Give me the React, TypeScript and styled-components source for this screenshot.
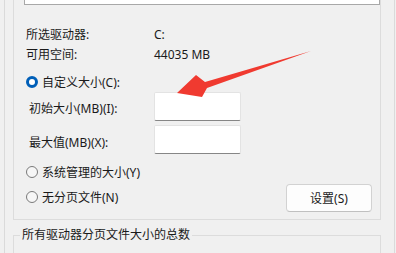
import styled, { createGlobalStyle } from "styled-components";

const GlobalStyle = createGlobalStyle`
  html, body {
    margin: 0;
    padding: 0;
    background: #f0f0f0;
    overflow: hidden;
  }
  body {
    font-family: "Noto Sans", "Noto Sans CJK SC", sans-serif;
    font-size: 12px;
    color: #1a1a1a;
  }
`;

const Frame = styled.div`
  position: relative;
  width: 396px;
  height: 253px;
  padding-left: 4px;
  box-sizing: border-box;
  overflow: hidden;
`;

const Panel = styled.div`
  width: 391px;
  height: 100%;
  border-left: 1px solid #dadada;
  border-right: 1px solid #dadada;
  padding: 0 13px 0 8px;
  box-sizing: border-box;
`;

const Group = styled.div`
  border: 1px solid #dcdcdc;
  border-top: none;
  padding-bottom: 7px;
`;

const ListBox = styled.div`
  margin-left: 10px;
  height: 5px;
  background: #ffffff;
  border: 1px solid #a8a8a8;
  border-top: none;
  box-sizing: border-box;
`;

const InfoGrid = styled.div`
  display: grid;
  grid-template-columns: 128px auto;
  margin: 20px 0 0 12px;
  line-height: 20px;
`;

const RadioRow = styled.label<{ $top?: number }>`
  display: flex;
  align-items: center;
  gap: 4px;
  height: 20px;
  padding-left: 12px;
  margin-top: ${(p) => p.$top ?? 0}px;
`;

const RadioDot = styled.span<{ $checked?: boolean }>`
  width: 12px;
  height: 12px;
  border-radius: 50%;
  box-sizing: border-box;
  flex: none;
  background: ${(p) => (p.$checked ? "#ffffff" : "#f6f6f6")};
  border: ${(p) => (p.$checked ? "3.5px solid #005fb8" : "1px solid #7a7a7a")};
`;

const SizeGrid = styled.div`
  display: grid;
  grid-template-columns: 125px 87px;
  row-gap: 4px;
  align-items: center;
  margin-left: 15px;
`;

const SizeLabel = styled.span<{ $shift?: number }>`
  position: relative;
  top: ${(p) => p.$shift ?? 0}px;
`;

const TextInput = styled.div`
  height: 29px;
  background: #ffffff;
  border: 1px solid #e3e3e3;
  border-bottom-color: #868686;
  border-radius: 2px;
  box-sizing: border-box;
`;

const Bottom = styled.div`
  display: flex;
  justify-content: space-between;
  align-items: flex-start;
  margin-top: 8px;
  padding-right: 8px;
`;

const RadioColumn = styled.div`
  display: flex;
  flex-direction: column;
  gap: 5px;
`;

const Button = styled.button`
  margin-top: 22px;
  width: 86px;
  height: 28px;
  background: #fdfdfd;
  border: 1px solid #d2d2d2;
  border-bottom-color: #c0c0c0;
  border-radius: 4px;
  font: inherit;
  color: #1a1a1a;
  padding: 0;
`;

const TotalGroup = styled.fieldset`
  margin: 7px 0 0;
  padding: 0;
  min-width: 0;
  height: 60px;
  border: 1px solid #dcdcdc;
  border-bottom: none;
`;

const Legend = styled.legend`
  margin-left: 6px;
  padding: 0 2px;
  line-height: 16px;
`;

const Arrow = styled.svg`
  position: absolute;
  left: 0;
  top: 0;
  pointer-events: none;
`;

export default function App() {
  return (
    <>
      <GlobalStyle />
      <Frame>
        <Panel>
          <Group>
            <ListBox />
            <InfoGrid>
              <span>所选驱动器:</span>
              <span>C:</span>
              <span>可用空间:</span>
              <span>44035 MB</span>
            </InfoGrid>
            <RadioRow $top={7}>
              <RadioDot $checked />
              自定义大小(C):
            </RadioRow>
            <SizeGrid>
              <SizeLabel $shift={1}>初始大小(MB)(I):</SizeLabel>
              <TextInput />
              <SizeLabel $shift={2}>最大值(MB)(X):</SizeLabel>
              <TextInput />
            </SizeGrid>
            <Bottom>
              <RadioColumn>
                <RadioRow>
                  <RadioDot />
                  系统管理的大小(Y)
                </RadioRow>
                <RadioRow>
                  <RadioDot />
                  无分页文件(N)
                </RadioRow>
              </RadioColumn>
              <Button>设置(S)</Button>
            </Bottom>
          </Group>
          <TotalGroup>
            <Legend>所有驱动器分页文件大小的总数</Legend>
          </TotalGroup>
        </Panel>
        <Arrow width="396" height="253" viewBox="0 0 396 253">
          <polygon
            points="177,93 196,75 205,82 311,51 207,88 202,97"
            fill="#f03a30"
          />
        </Arrow>
      </Frame>
    </>
  );
}
